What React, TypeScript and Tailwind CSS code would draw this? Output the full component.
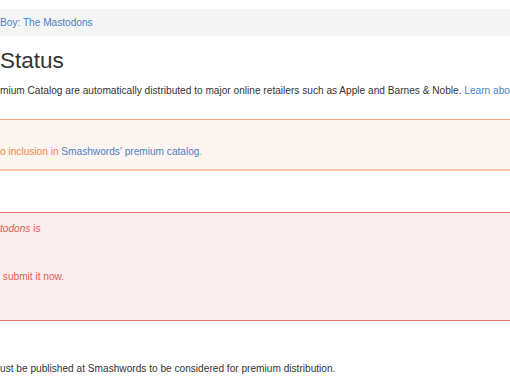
export default function App() {
  return (
    <div className="w-[510px] h-[382px] overflow-hidden bg-white font-['Liberation_Sans',Arial,sans-serif] text-[10.15px] text-[#333] whitespace-nowrap">
      <div className="pt-[9px]">
        <div className="h-[27px] bg-[#f5f5f5] flex items-center text-[#4a7fc4]">
          Boy: The Mastodons
        </div>
      </div>
      <h1 className="mt-[14px] text-[22.5px] leading-[22px] text-[#333]">Status</h1>
      <p className="mt-[12px] leading-[14px]">
        mium Catalog are automatically distributed to major online retailers such as Apple and Barnes &amp; Noble.{" "}
        <span className="text-[#4a7fc4]">Learn abo</span>
      </p>
      <div className="mt-[21px] border-t border-b-2 border-t-[#f5a67c] border-b-[#fbc9aa] bg-[#fdf5ef] pt-[25px] pb-[10px] leading-[14px] text-[#f0883e]">
        o inclusion in <span className="text-[#4a7fc4]">Smashwords' premium catalog</span>.
      </div>
      <div className="mt-[41px] border-t border-b border-[#e4756c] bg-[#f9eeed] pt-[9px] pb-[36px] leading-[14px] text-[#dc6057]">
        <div>
          <i>todons</i> is
        </div>
        <div className="mt-[34px]">&nbsp;submit it now.</div>
      </div>
      <p className="mt-[41px] leading-[14px]">
        ust be published at Smashwords to be considered for premium distribution.
      </p>
    </div>
  );
}
